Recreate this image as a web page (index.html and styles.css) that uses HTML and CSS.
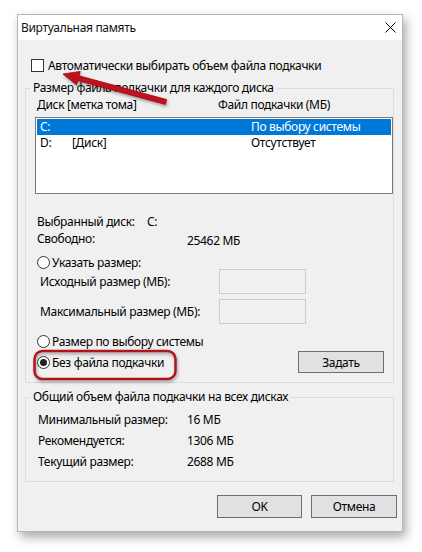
FILE: index.html
```html
<!DOCTYPE html>
<html lang="ru">
<head>
<meta charset="utf-8">
<title>Виртуальная память</title>
<link rel="stylesheet" href="styles.css">
</head>
<body>
<div class="window">
  <div class="titlebar">
    <span class="title">Виртуальная память</span>
    <svg class="close" viewBox="0 0 11 11" width="11" height="11"><path d="M0.5 0.5L10.5 10.5M10.5 0.5L0.5 10.5" stroke="#000" stroke-width="1" fill="none"/></svg>
  </div>
  <div class="content">
    <div class="check-row"><span class="checkbox"></span><span>Автоматически выбирать объем файла подкачки</span></div>

    <div class="group g1">
      <div class="legend">Размер файла подкачки для каждого диска</div>
      <div class="cols"><span class="col1">Диск [метка тома]</span><span>Файл подкачки (МБ)</span></div>
      <div class="listbox">
        <div class="row sel"><span class="cd">C:</span><span class="cl"></span><span>По выбору системы</span></div>
        <div class="row"><span class="cd">D:</span><span class="cl">[Диск]</span><span>Отсутствует</span></div>
      </div>
      <div class="info">
        <div class="kv"><span class="k1">Выбранный диск:</span><span>C:</span></div>
        <div class="kv"><span class="k2">Свободно:</span><span class="low">25462 МБ</span></div>
      </div>
      <div class="radio-row r1"><span class="radio"></span><span>Указать размер:</span></div>
      <div class="field-row"><span class="flabel">Исходный размер (МБ):</span><span class="edit"></span></div>
      <div class="field-row f2"><span class="flabel">Максимальный размер (МБ):</span><span class="edit"></span></div>
      <div class="radio-row r3"><span class="radio"></span><span>Размер по выбору системы</span></div>
      <div class="last-row">
        <div class="radio-line"><span class="radio on"></span><span>Без файла подкачки</span></div>
        <span class="btn set">Задать</span>
      </div>
    </div>

    <div class="group g2">
      <div class="legend">Общий объем файла подкачки на всех дисках</div>
      <div class="totals">
        <div class="trow"><span class="tk">Минимальный размер:</span><span>16 МБ</span></div>
        <div class="trow"><span class="tk">Рекомендуется:</span><span>1306 МБ</span></div>
        <div class="trow"><span class="tk">Текущий размер:</span><span>2688 МБ</span></div>
      </div>
    </div>

    <div class="buttons">
      <span class="btn ok">OK</span>
      <span class="btn cancel">Отмена</span>
    </div>
  </div>

  <svg class="overlay" viewBox="0 0 422 552" width="422" height="552">
    <rect class="hl" x="34.5" y="351" width="141" height="28" rx="8" ry="8"/>
    <polygon class="arrow" points="63,74 80.2,71.4 79.1,75.8 166.7,99.6 165.3,104.4 77.7,80.6 76.6,84.9"/>
  </svg>
</div>
</body>
</html>
```
FILE: styles.css
```css
* { box-sizing: border-box; }
html, body { margin: 0; background: #fff; }
body {
  font-family: "Noto Sans", "DejaVu Sans", sans-serif;
  font-size: 12px;
  letter-spacing: -0.33px;
  color: #000;
  width: 422px;
  height: 552px;
  overflow: hidden;
  padding: 14px 0 0 17px;
}
.window {
  position: relative;
  width: 386px;
  height: 518px;
  background: #f0f0f0;
  border: 1px solid #b8b8b8;
  box-shadow: 3px 5px 10px rgba(0,0,0,.35);
}
.titlebar {
  height: 25px;
  background: #fff;
  display: flex;
  align-items: center;
  padding: 0 6px 0 3px;
}
.title { flex: 1; line-height: 25px; color: #111; }
.close { display: block; }
.content { padding: 17px 0 0 7px; }

.check-row {
  display: flex;
  align-items: center;
  height: 16px;
  margin-left: 6px;
  gap: 4px;
}
.checkbox {
  width: 13px; height: 13px;
  border: 1px solid #333;
  background: #fff;
}

.group {
  width: 369px;
  border: 1px solid #dcdcdc;
}
.g1 { margin-top: 15px; padding-bottom: 9px; }
.g2 { margin-top: 14px; padding-bottom: 9px; }
.legend {
  width: fit-content;
  margin: -9px 0 0 5px;
  padding: 0 2px;
  line-height: 16px;
  background: #f0f0f0;
}
.cols {
  display: flex;
  margin-top: 1px;
  padding-left: 11px;
  line-height: 16px;
}
.col1 { width: 181px; }

.listbox {
  margin: 4px 0 0 9px;
  width: 358px;
  height: 77px;
  border: 1px solid #7a7a7a;
  background: #fff;
  padding: 1px;
}
.row {
  display: flex;
  height: 16px;
  line-height: 16px;
  padding-left: 3px;
}
.row.sel { background: #0078d7; color: #fff; }
.cd { width: 32px; }
.cl { width: 179px; }

.info { margin-top: 20px; padding-left: 11px; line-height: 16.5px; }
.kv { display: flex; height: 16.5px; }
.k1 { width: 110px; }
.k2 { width: 150px; }
.low { padding-top: 2px; }

.radio-row, .radio-line {
  display: flex;
  align-items: center;
  gap: 2px;
  height: 14px;
}
.radio-row { padding-left: 11px; }
.r1 { margin-top: 8px; }
.r3 { margin-top: 10px; }
.radio {
  width: 13px; height: 13px;
  border: 1px solid #333;
  border-radius: 50%;
  background: #fff;
  display: flex;
  align-items: center;
  justify-content: center;
}
.radio.on::after {
  content: "";
  width: 7px; height: 7px;
  border-radius: 50%;
  background: #222;
}

.field-row {
  display: flex;
  align-items: center;
  height: 25px;
  padding-left: 14px;
}
.f2 { margin-top: 5px; }
.flabel { width: 179px; }
.edit {
  width: 87px; height: 25px;
  border: 1px solid #cccccc;
  background: #f0f0f0;
}

.last-row {
  display: flex;
  align-items: center;
  justify-content: space-between;
  height: 22px;
  margin-top: 3px;
  padding: 0 9px 0 11px;
}

.btn {
  display: flex;
  align-items: center;
  justify-content: center;
  background: #e1e1e1;
  border: 1px solid #6e6e6e;
}
.set { width: 86px; height: 22px; }

.totals { margin-top: 4px; padding-left: 12px; }
.trow { display: flex; line-height: 21px; height: 21px; }
.tk { width: 149px; }

.buttons {
  display: flex;
  justify-content: flex-end;
  gap: 9px;
  margin-top: 13px;
  padding-right: 5px;
}
.ok { width: 85px; height: 23px; }
.cancel { width: 86px; height: 23px; }

.overlay {
  position: absolute;
  left: -18px;
  top: -15px;
  pointer-events: none;
  overflow: visible;
}
.hl {
  fill: none;
  stroke: #b3141c;
  stroke-width: 2.5;
  filter: drop-shadow(1px 2px 1.5px rgba(0,0,0,.35));
}
.arrow {
  fill: #c4101c;
  stroke: #9a0b14;
  stroke-width: 0.8;
  stroke-linejoin: round;
  filter: drop-shadow(1px 2px 1.5px rgba(0,0,0,.35));
}
```
